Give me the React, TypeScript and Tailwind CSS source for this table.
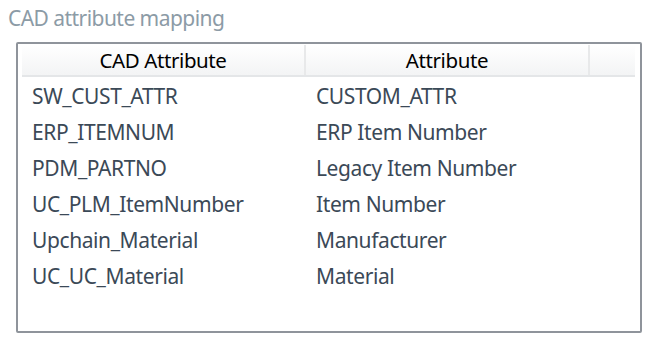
import React from 'react';

const rows: [string, string][] = [
    ['SW_CUST_ATTR', 'CUSTOM_ATTR'],
    ['ERP_ITEMNUM', 'ERP Item Number'],
    ['PDM_PARTNO', 'Legacy Item Number'],
    ['UC_PLM_ItemNumber', 'Item Number'],
    ['Upchain_Material', 'Manufacturer'],
    ['UC_UC_Material', 'Material'],
];

export default function App() {
    return (
        <div className="w-[649px] h-[343px] bg-white font-['Noto_Sans',sans-serif] relative">
            <div className="pl-[8px] pt-[3px] h-[42px] text-[21px] leading-[30px] text-[#8c9ba6] tracking-[-0.55px]">
                CAD attribute mapping
            </div>
            <div className="ml-[16px] w-[626px] h-[291px] border-2 border-[#8f949b] rounded-[2px] pl-[4px] pr-[5px] pt-[1px]">
                <div className="flex h-[32px] border-b-2 border-[#e4e6e8] bg-gradient-to-b from-white to-[#f3f4f5] text-[20.5px] text-black tracking-[-0.4px]">
                    <div className="w-[284px] flex items-center justify-center border-r-2 border-[#e8e9ea]">CAD Attribute</div>
                    <div className="w-[284px] flex items-center justify-center border-r-2 border-[#e8e9ea]">Attribute</div>
                    <div className="flex-1" />
                </div>
                <div className="pt-[2px]">
                    {rows.map(([cad, attr]) => (
                        <div key={cad} className="flex h-[36px] items-center text-[21px] text-[#3b4957] tracking-[-0.4px]">
                            <div className="w-[284px] pl-[10px]">{cad}</div>
                            <div className="w-[284px] pl-[10px]">{attr}</div>
                        </div>
                    ))}
                </div>
            </div>
        </div>
    );
}
